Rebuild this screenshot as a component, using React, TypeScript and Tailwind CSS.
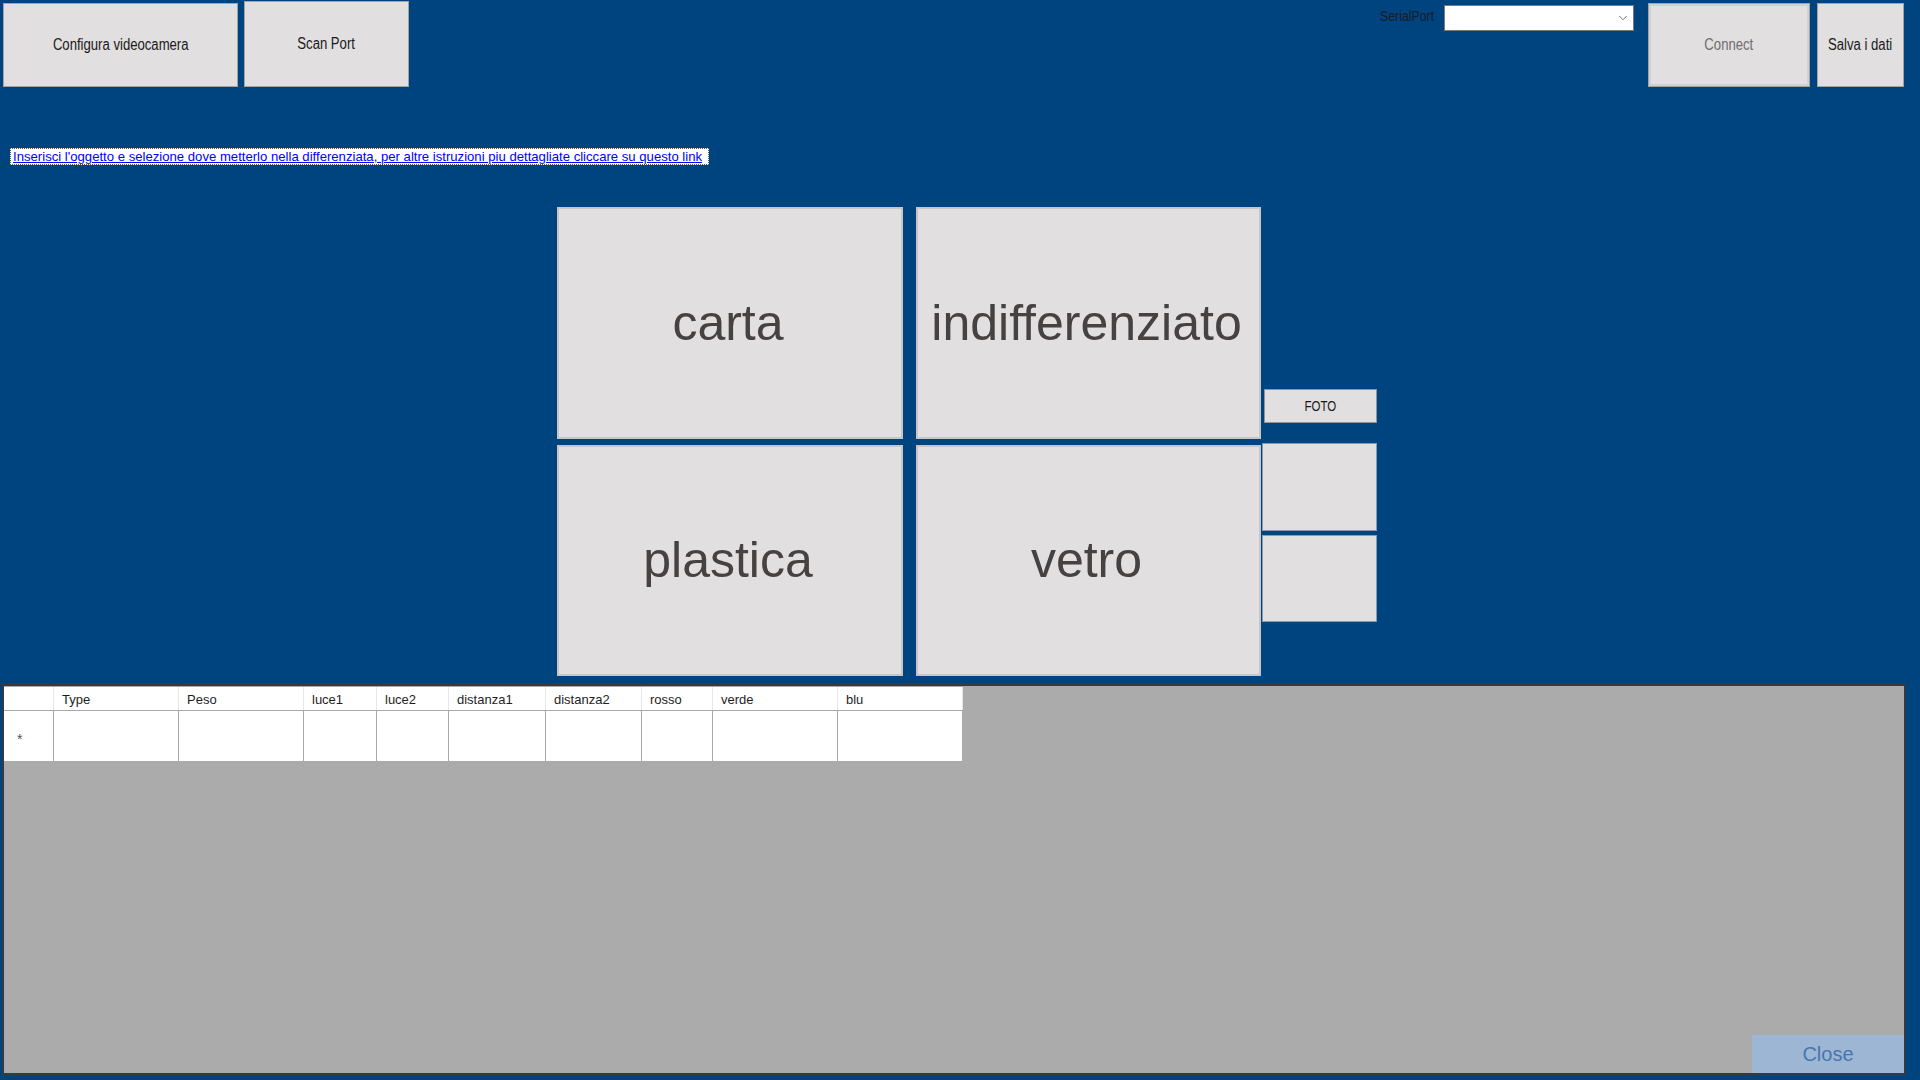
import { ChevronDown } from 'lucide-react';

const FONT = { fontFamily: '"Liberation Sans", Arial, sans-serif' };

interface Column {
  label: string;
  width: string;
}

const COLUMNS: Column[] = [
  { label: 'Type', width: 'w-[125px]' },
  { label: 'Peso', width: 'w-[125px]' },
  { label: 'luce1', width: 'w-[73px]' },
  { label: 'luce2', width: 'w-[72px]' },
  { label: 'distanza1', width: 'w-[97px]' },
  { label: 'distanza2', width: 'w-[96px]' },
  { label: 'rosso', width: 'w-[71px]' },
  { label: 'verde', width: 'w-[125px]' },
  { label: 'blu', width: 'w-[125px]' },
];

function Narrow({ children, className = '' }: { children: React.ReactNode; className?: string }) {
  // the form was drawn with a squeezed sans font, so shrink it sideways
  return <span className={`inline-block whitespace-nowrap scale-x-[0.82] ${className}`}>{children}</span>;
}

function BinButton({ label }: { label: string }) {
  return (
    <button className="w-full h-full bg-[#e1dfdf] border-2 border-[#c7c5c5] flex items-center justify-center pr-[4px] text-[50px] text-[#474242]">
      {label}
    </button>
  );
}

function DataGrid() {
  return (
    <div className="relative ml-[2px] mt-[8px] w-[1904px] h-[391px] bg-[#ababab] border-2 border-[#333a42]">
      <div className="pt-[1px] w-[959px]">
        {/* header row */}
        <div className="flex h-[24px] bg-white border-b border-[#a9a9a9]">
          <div className="w-[50px] border-r border-[#e6e6e6]" />
          {COLUMNS.map((col) => (
            <div
              key={col.label}
              className={`${col.width} border-r border-[#e6e6e6] pl-[8px] pt-[2px] flex items-center text-[13px] text-[#1e1e1e]`}
            >
              {col.label}
            </div>
          ))}
        </div>

        {/* new row */}
        <div className="flex h-[51px] bg-white border-b border-[#a9a9a9]">
          <div className="w-[50px] border-r border-[#a9a9a9] flex items-center pl-[13px] pt-[6px] text-[#555] text-[14px]">
            *
          </div>
          {COLUMNS.map((col) => (
            <div key={col.label} className={`${col.width} border-r border-[#a9a9a9]`} />
          ))}
        </div>
      </div>

      <button className="absolute right-0 bottom-0 w-[152px] h-[38px] bg-[#9db6d4] text-[20px] text-[#4775ae] flex items-center justify-center">
        Close
      </button>
    </div>
  );
}

export default function App() {
  return (
    <div className="w-[1920px] h-[1080px] bg-[#00447f] overflow-hidden" style={FONT}>
      {/* top toolbar */}
      <div className="h-[88px] flex justify-between">
        <div className="flex items-start gap-[6px] pl-[3px]">
          <button className="mt-[3px] w-[235px] h-[84px] bg-[#e1dfdf] border border-[#a3a3a3] text-[16px] text-[#1a1a1a]">
            <Narrow>Configura videocamera</Narrow>
          </button>
          <button className="mt-[1px] w-[165px] h-[86px] bg-[#e1dfdf] border border-[#a3a3a3] text-[16px] text-[#1a1a1a]">
            <Narrow>Scan Port</Narrow>
          </button>
        </div>

        <div className="flex items-start pr-[16px]">
          <div className="mt-[6px] w-[64px] text-[14px] text-[#1a1a2a]">
            <span className="inline-block whitespace-nowrap origin-left scale-x-[0.88]">SerialPort</span>
          </div>
          <div className="mt-[5px] w-[190px] h-[26px] bg-white border border-[#7a7a7a] flex items-center justify-end pr-[3px]">
            <ChevronDown size={14} strokeWidth={1.5} className="text-[#606060]" />
          </div>
          <button className="ml-[14px] mt-[3px] w-[162px] h-[84px] bg-[#e1dfdf] border border-[#a3a3a3] ring-2 ring-inset ring-[#d2d0d0] text-[16px] text-[#6d6d6d]">
            <Narrow>Connect</Narrow>
          </button>
          <button className="ml-[7px] mt-[3px] w-[87px] h-[84px] bg-[#e1dfdf] border border-[#a3a3a3] text-[16px] text-[#1a1a1a]">
            <Narrow>Salva i dati</Narrow>
          </button>
        </div>
      </div>

      {/* help link */}
      <div className="mt-[60px] ml-[10px] w-[699px] h-[17px] bg-white border border-dotted border-[#555] flex items-center overflow-hidden">
        <span className="inline-block whitespace-nowrap origin-left scale-x-[1.01] text-[13px] leading-none text-[#0000ff] underline pl-[2px]">
          Inserisci l'oggetto e selezione dove metterlo nella differenziata, per altre istruzioni piu dettagliate cliccare su questo link
        </span>
      </div>

      {/* waste buttons */}
      <div className="mt-[42px] ml-[557px] h-[469px] flex">
        <div className="grid grid-cols-[346px_345px] grid-rows-[232px_231px] gap-x-[13px] gap-y-[6px]">
          <BinButton label="carta" />
          <BinButton label="indifferenziato" />
          <BinButton label="plastica" />
          <BinButton label="vetro" />
        </div>

        <div className="ml-[1px] w-[115px] flex flex-col">
          <button className="mt-[182px] ml-[2px] w-[113px] h-[34px] bg-[#e1dfdf] border border-[#8f949a] text-[14px] text-[#1a1a1a]">
            <Narrow>FOTO</Narrow>
          </button>
          <div className="mt-[20px] w-[115px] h-[88px] bg-[#e1dfdf] border border-[#8a9bb0]" />
          <div className="mt-[4px] w-[115px] h-[87px] bg-[#e1dfdf] border border-[#8a9bb0]" />
        </div>
      </div>

      <DataGrid />
    </div>
  );
}
